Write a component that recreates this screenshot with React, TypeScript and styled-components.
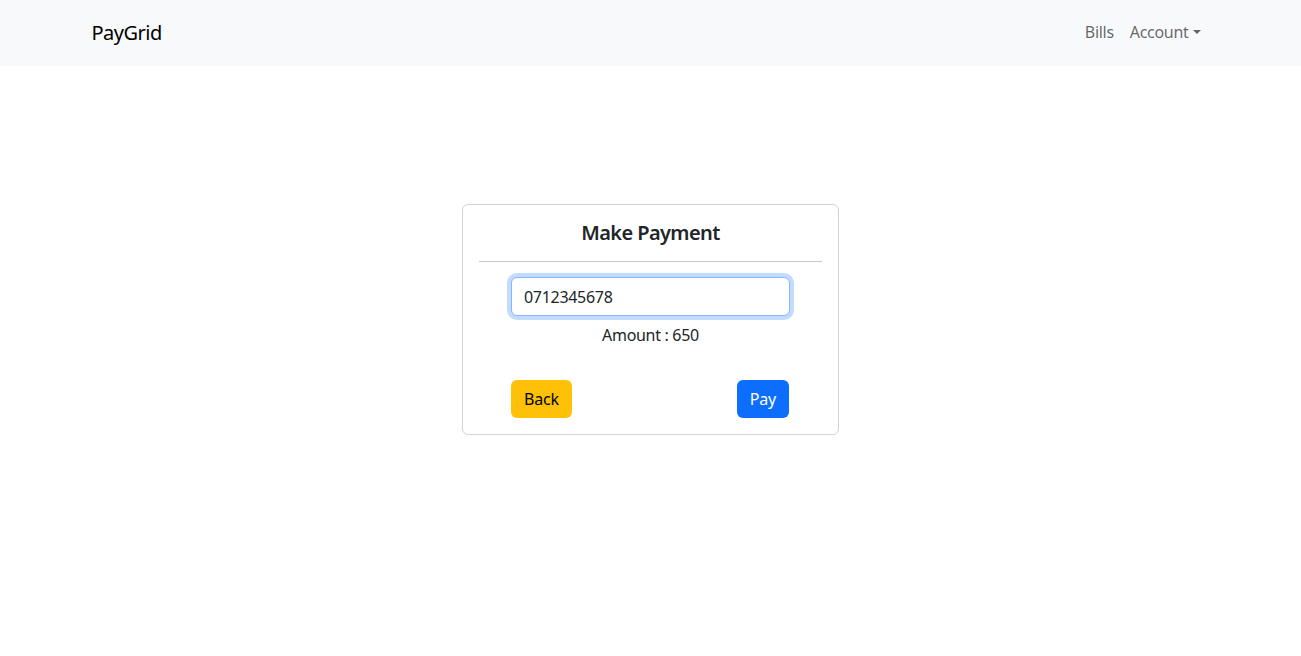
import React from 'react';
import { styled, createGlobalStyle } from 'styled-components';

const GlobalStyle = createGlobalStyle`
  body {
    margin: 0;
    font-family: 'Noto Sans', 'Open Sans', sans-serif;
    font-size: 16px;
    color: #212529;
    background: #fff;
  }
  * { box-sizing: border-box; }
`;

// Navbar
const Navbar = styled.nav`
  background: #f8f9fa;
  height: 66px;
  padding-bottom: 2px;
  display: flex;
  align-items: center;
`;

const NavContainer = styled.div`
  width: 1140px;
  margin: 0 auto;
  padding: 0 12px;
  display: flex;
  align-items: center;
  justify-content: space-between;
`;

const Brand = styled.a`
  font-size: 20px;
  color: #000;
  text-decoration: none;
  letter-spacing: -0.5px;
  margin-left: -1px;
`;

const NavLinks = styled.div`
  display: flex;
  align-items: center;
`;

const NavLink = styled.a<{ $dropdown?: boolean }>`
  color: rgba(0, 0, 0, 0.6);
  text-decoration: none;
  padding: 8px;
  letter-spacing: -0.3px;
  display: flex;
  align-items: center;

  ${p => p.$dropdown && `
    &::after {
      content: '';
      margin-left: 4px;
      border-top: 4.5px solid;
      border-left: 4px solid transparent;
      border-right: 4px solid transparent;
    }
  `}
`;

// Card
const Main = styled.main`
  display: flex;
  justify-content: center;
  padding-top: 138px;
`;

const Card = styled.div`
  width: 377px;
  border: 1px solid #d3d3d3;
  border-radius: 6px;
  padding: 16px;
`;

const Title = styled.h5`
  margin: 0;
  font-size: 20px;
  line-height: 24px;
  font-weight: 600;
  text-align: center;
  letter-spacing: -0.6px;
`;

const Divider = styled.hr`
  margin: 16px 0;
  border: 0;
  border-top: 1px solid #c8c8c8;
`;

const Form = styled.div`
  width: 279px;
  margin: 0 auto;
  display: flex;
  flex-direction: column;
`;

const Input = styled.input`
  height: 39px;
  margin-top: -1px;
  padding: 6px 12px;
  font: inherit;
  color: #212529;
  caret-color: #000;
  border: 1px solid #86b7fe;
  border-radius: 6px;
  outline: none;
  box-shadow: 0 0 0 4px rgba(13, 110, 253, 0.25);
  letter-spacing: -0.3px;
`;

const Amount = styled.p`
  margin: 7px 0 0;
  line-height: 24px;
  text-align: center;
  letter-spacing: -0.3px;
`;

const Actions = styled.div`
  margin-top: 33px;
  display: flex;
  justify-content: space-between;
  padding-right: 1px;
`;

const Button = styled.button<{ $variant: 'warning' | 'primary' }>`
  height: 38px;
  padding: 0 13px;
  font: inherit;
  border: 0;
  border-radius: 6px;
  letter-spacing: -0.2px;
  ${p => p.$variant === 'warning'
    ? 'background: #ffc107; color: #000;'
    : 'background: #0d6efd; color: #fff;'}
`;

export default function App() {
  return (
    <>
      <GlobalStyle />
      <Navbar>
        <NavContainer>
          <Brand href="#">PayGrid</Brand>
          <NavLinks>
            <NavLink href="#">Bills</NavLink>
            <NavLink href="#" $dropdown>Account</NavLink>
          </NavLinks>
        </NavContainer>
      </Navbar>
      <Main>
        <Card>
          <Title>Make Payment</Title>
          <Divider />
          <Form>
            <Input defaultValue="0712345678" autoFocus />
            <Amount>Amount : 650</Amount>
            <Actions>
              <Button $variant="warning">Back</Button>
              <Button $variant="primary">Pay</Button>
            </Actions>
          </Form>
        </Card>
      </Main>
    </>
  );
}
